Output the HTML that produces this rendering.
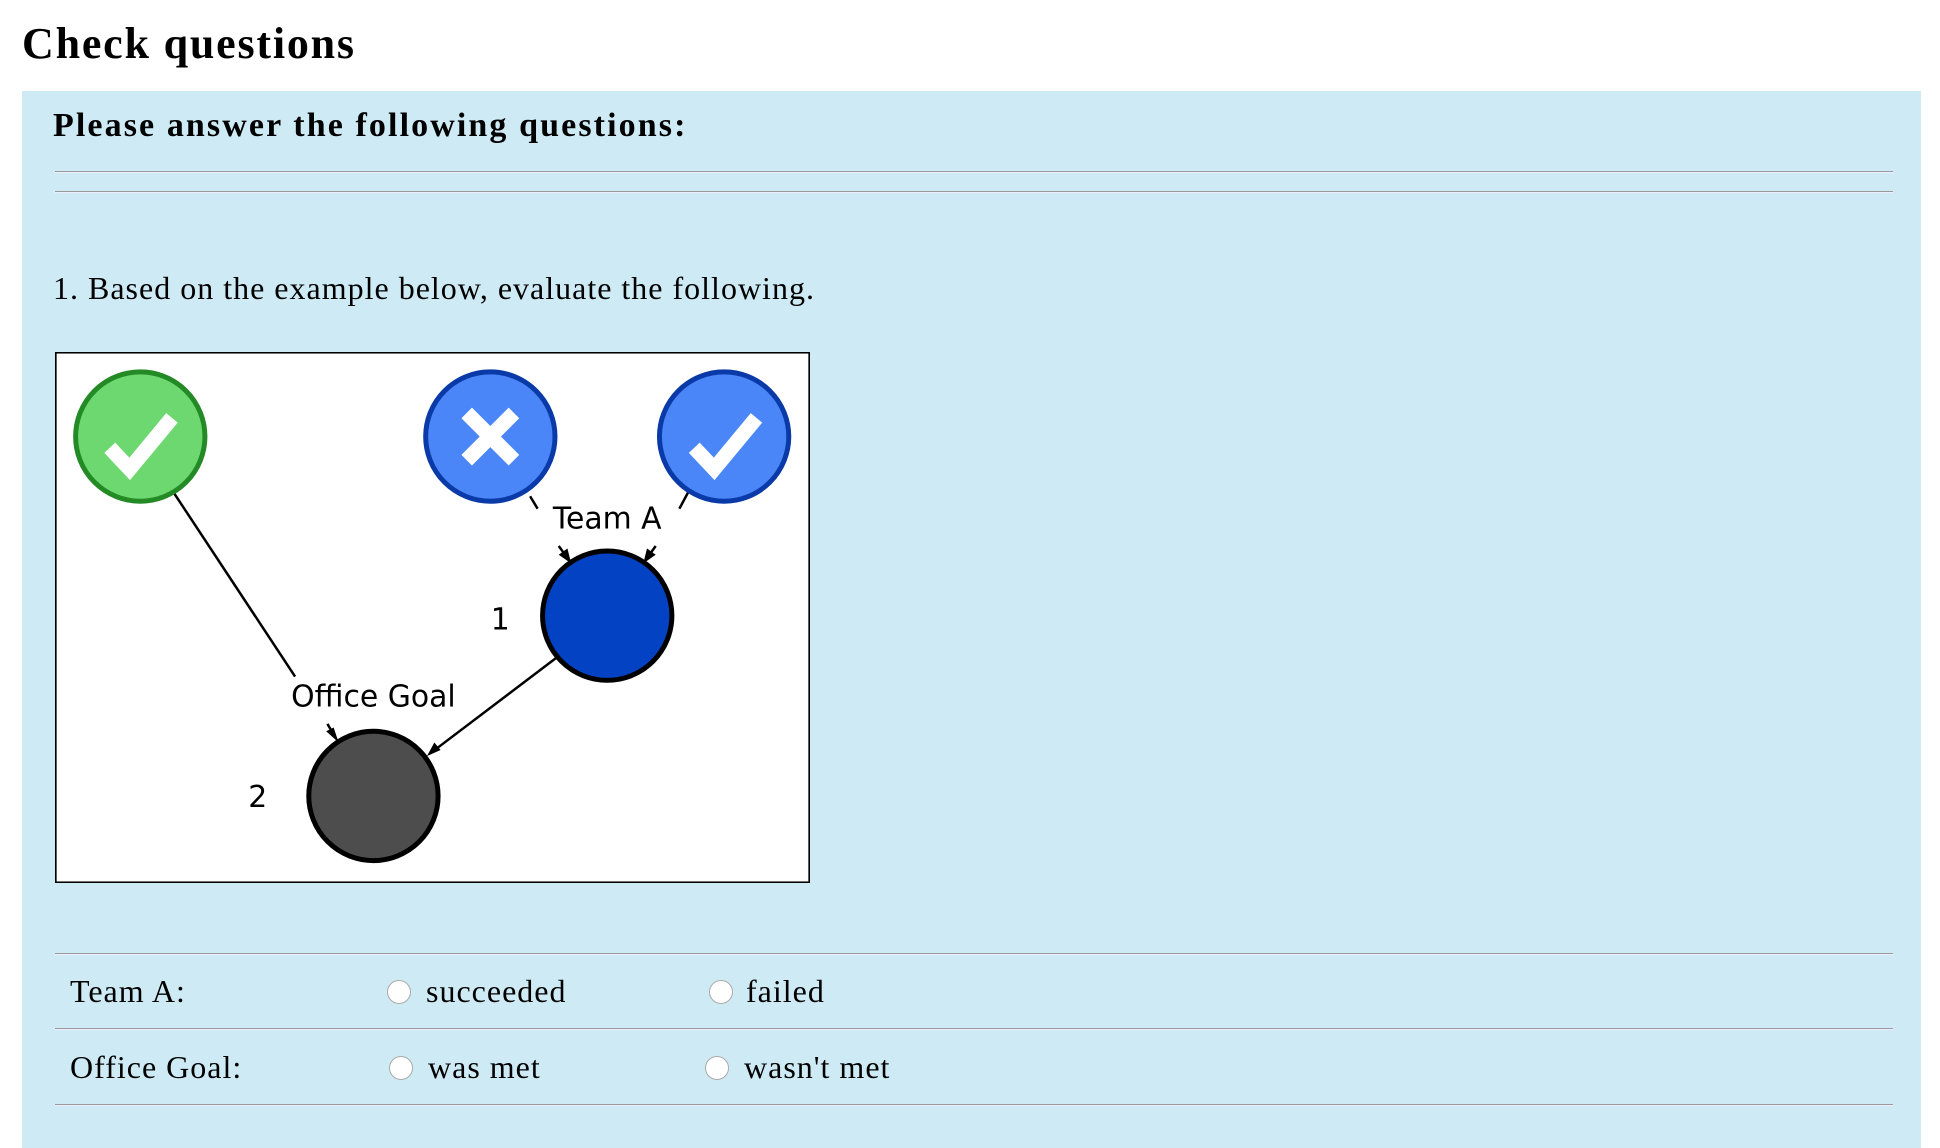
<!DOCTYPE html>
<html><head><meta charset="utf-8"><style>
body{margin:0;width:1940px;height:1148px;background:#fff;position:relative;overflow:hidden;font-family:"Liberation Serif",serif;color:#000}
.a{position:absolute;white-space:nowrap}
h1{position:absolute;left:22px;top:18px;margin:0;font-size:44px;font-weight:bold;letter-spacing:1.8px}
#panel{position:absolute;left:22px;top:91px;width:1899px;height:1057px;background:#ceebf5}
.hr{position:absolute;left:55px;width:1838px;height:1px;background:#999;border-bottom:1px solid #eef}
.radio{position:absolute;width:24px;height:24px;border-radius:50%;background:#fff;border:1px solid #aaa;box-sizing:border-box}
.t{font-size:32px;letter-spacing:1px}
</style></head><body>
<h1>Check questions</h1>
<div id="panel"></div>
<div class="a" style="left:53px;top:107px;font-size:34px;font-weight:bold;letter-spacing:2.1px">Please answer the following questions:</div>
<div class="hr" style="top:171px"></div>
<div class="hr" style="top:191px"></div>
<div class="a t" style="left:53px;top:270px">1. Based on the example below, evaluate the following.</div>
<svg class="a" style="left:55px;top:352px" width="755" height="531" viewBox="44 284 607 427">
<rect x="44.5" y="284.5" width="606" height="426" fill="#fff" stroke="#000" stroke-width="1.5"/>
<g stroke="#000" stroke-width="2" fill="none">
<line x1="140" y1="398" x2="237" y2="545"/>
<line x1="426" y1="400" x2="432" y2="410"/>
<line x1="553" y1="397" x2="546" y2="410"/>
<line x1="449" y1="440" x2="457" y2="451"/>
<line x1="527" y1="440" x2="519" y2="451"/>
<line x1="263" y1="583" x2="270" y2="595"/>
<line x1="447" y1="530" x2="348" y2="605"/>
</g>
<g fill="#000">
<polygon points="459,454 449,447 456,442"/>
<polygon points="517,454 520,442 527,447"/>
<polygon points="272,598 262,589 268,586"/>
<polygon points="343,609 349,598 354,604"/>
</g>
<circle cx="112.5" cy="352" r="52" fill="#6dd870" stroke="#238a25" stroke-width="4"/>
<polyline points="88,361 104,378 138,337" fill="none" stroke="#fff" stroke-width="12"/>
<circle cx="394" cy="352" r="52" fill="#4a86f8" stroke="#0a3aa8" stroke-width="4"/>
<g stroke="#fff" stroke-width="12"><line x1="375" y1="333" x2="413" y2="371"/><line x1="413" y1="333" x2="375" y2="371"/></g>
<circle cx="582" cy="352" r="52" fill="#4a86f8" stroke="#0a3aa8" stroke-width="4"/>
<polyline points="558,361 574,378 608,337" fill="none" stroke="#fff" stroke-width="12"/>
<circle cx="488" cy="496" r="52" fill="#0342c2" stroke="#000" stroke-width="4"/>
<circle cx="300" cy="641" r="52" fill="#4d4d4d" stroke="#000" stroke-width="4"/>
<g font-family="DejaVu Sans,sans-serif" font-size="24" fill="#000">
<text x="488" y="426" text-anchor="middle">Team A</text>
<text x="402" y="507" text-anchor="middle">1</text>
<text x="300" y="569" text-anchor="middle">Office Goal</text>
<text x="207" y="650" text-anchor="middle">2</text>
</g>
</svg>
<div class="hr" style="top:953px"></div>
<div class="hr" style="top:1028px"></div>
<div class="hr" style="top:1104px"></div>
<div class="a t" style="left:70px;top:973px">Team A:</div>
<div class="radio" style="left:387px;top:980px"></div>
<div class="a t" style="left:426px;top:973px">succeeded</div>
<div class="radio" style="left:709px;top:980px"></div>
<div class="a t" style="left:746px;top:973px">failed</div>
<div class="a t" style="left:70px;top:1049px">Office Goal:</div>
<div class="radio" style="left:389px;top:1056px"></div>
<div class="a t" style="left:428px;top:1049px">was met</div>
<div class="radio" style="left:705px;top:1056px"></div>
<div class="a t" style="left:744px;top:1049px">wasn't met</div>
</body></html>
